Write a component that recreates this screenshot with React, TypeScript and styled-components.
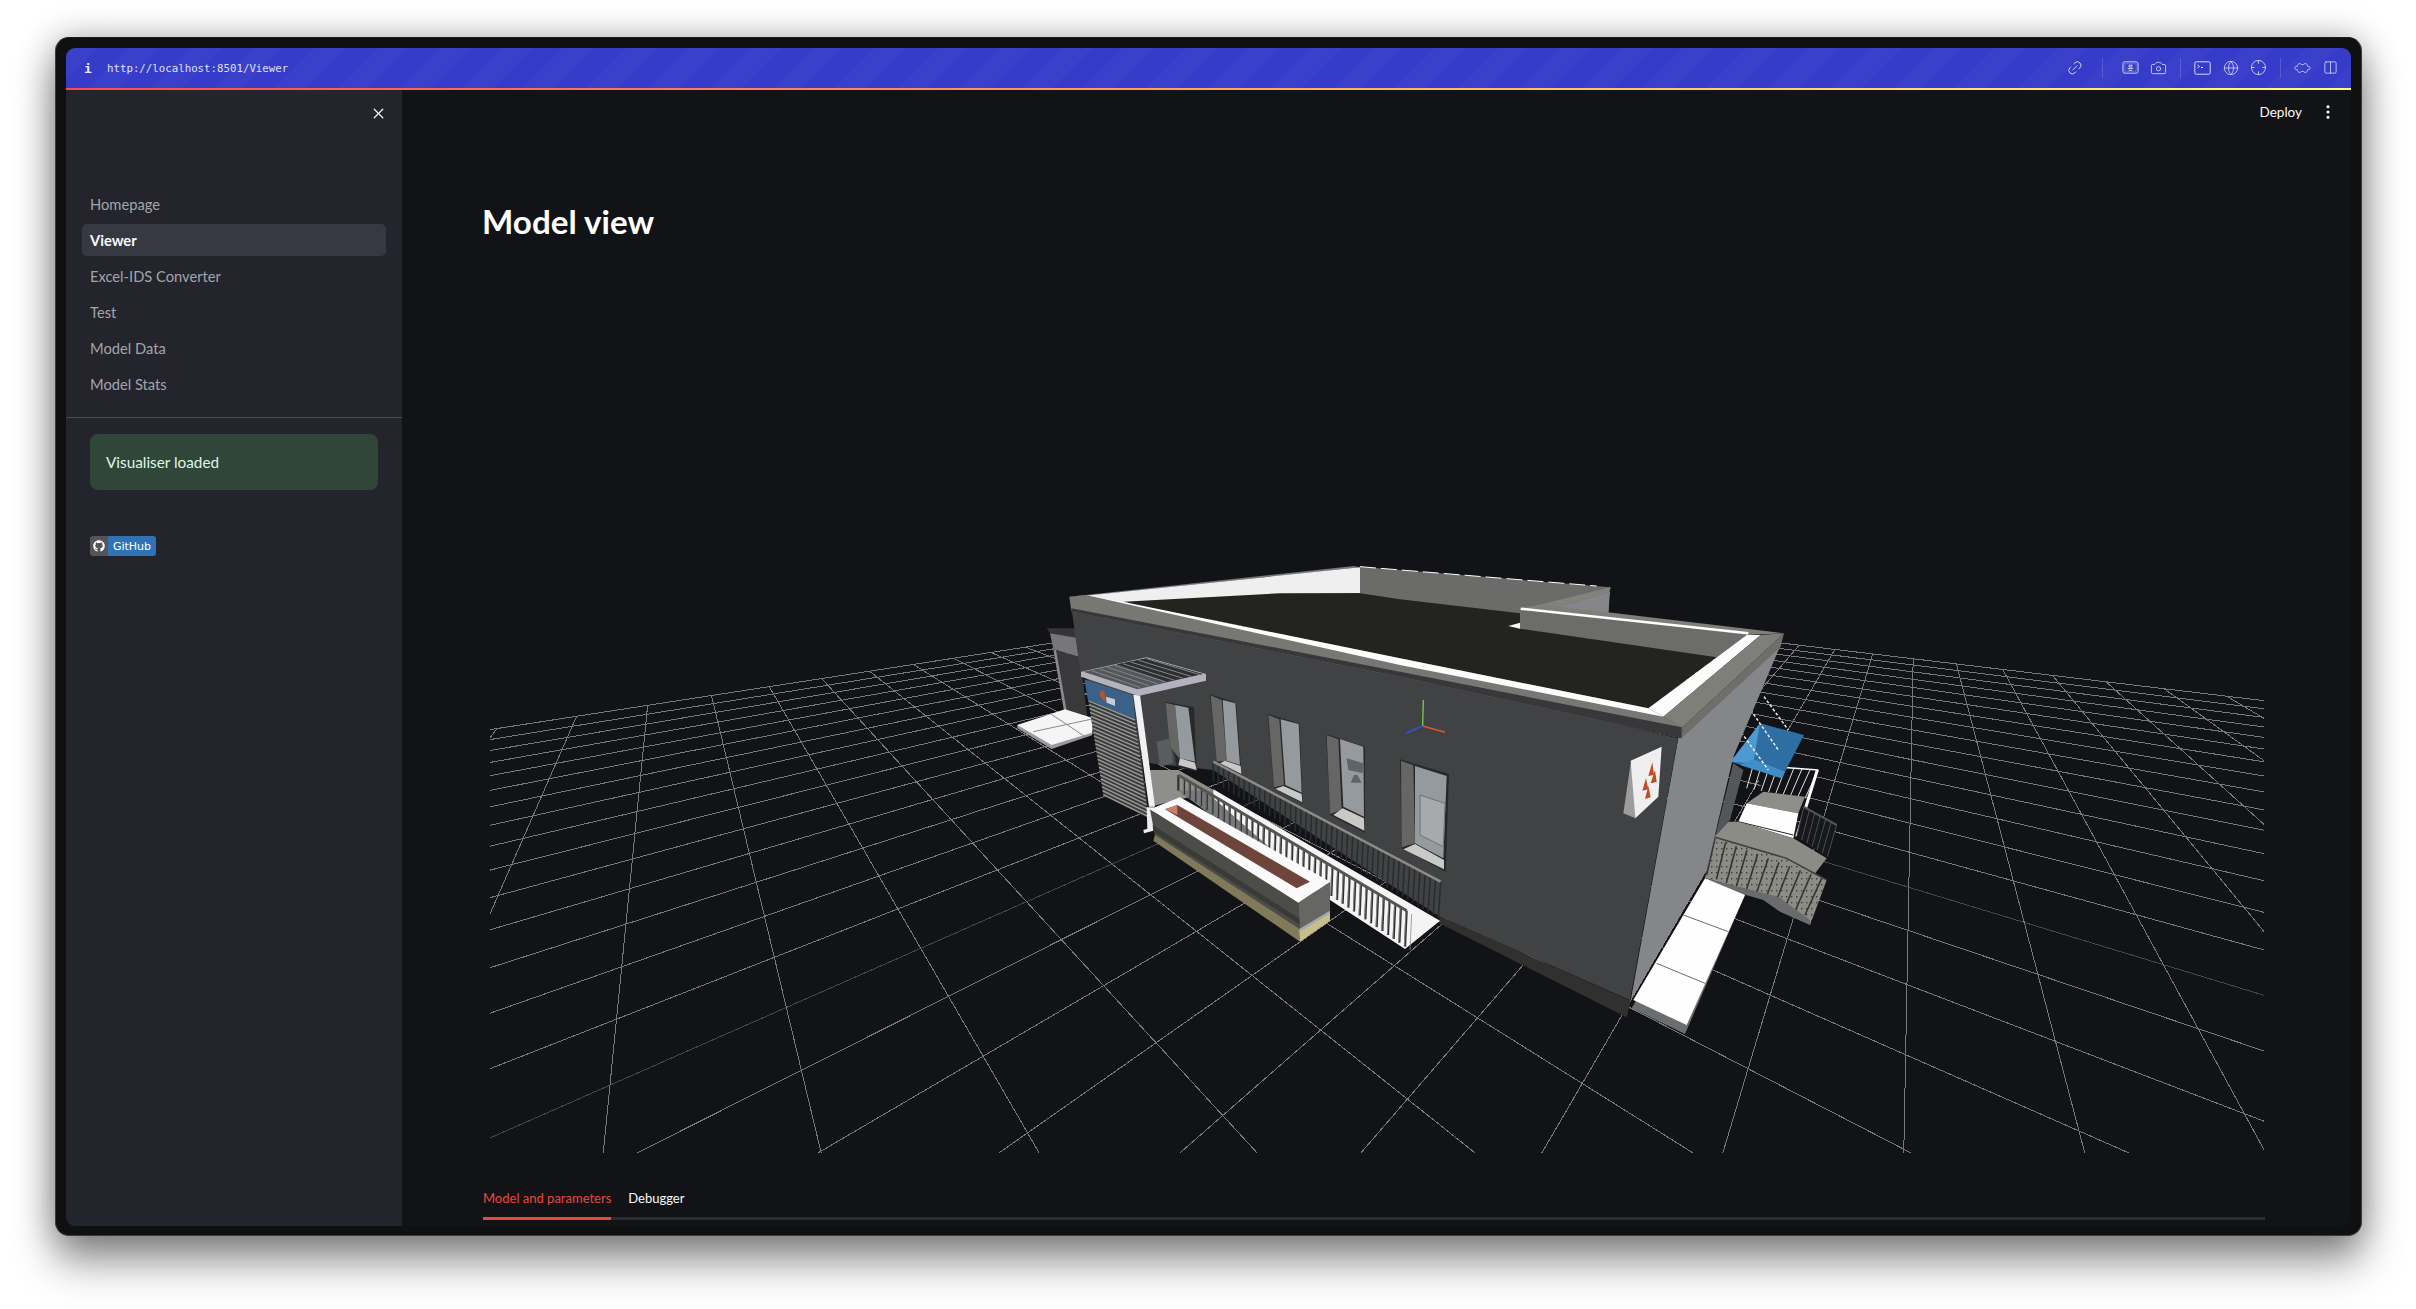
import React from 'react'
import styled, { createGlobalStyle } from 'styled-components'
import { Camera, Columns2, Crosshair, EllipsisVertical, Globe, Link2, X } from 'lucide-react'
import { FaGithub } from 'react-icons/fa'

const GlobalStyle = createGlobalStyle`
  html, body {
    margin: 0;
    height: 1309px;
    background: #fff;
    overflow: hidden;
  }
  body {
    font-family: Lato, "Noto Sans", sans-serif;
  }
`

const Page = styled.div`
  padding: 37px 0 0 55px;
`

const Frame = styled.div`
  width: 2307px;
  height: 1199px;
  box-sizing: border-box;
  padding: 10px 10px 9px;
  background: #0f1012;
  border-radius: 14px;
  border: 1px solid #3c3c3e;
  border-top-color: #1c1c1e;
  box-shadow: 0 26px 42px rgba(0, 0, 0, 0.42), 0 0 34px rgba(0, 0, 0, 0.28);
`

const Inner = styled.div`
  height: 100%;
  display: flex;
  flex-direction: column;
  overflow: hidden;
  border-radius: 9px;
  background: #121317;
`

const Toolbar = styled.div`
  height: 39.5px;
  flex: none;
  display: flex;
  align-items: center;
  padding: 0 12px 0 18px;
  color: #d9dbf7;
  background-color: #363bc9;
  background-image: repeating-linear-gradient(
    135deg,
    rgba(255, 255, 255, 0.025) 0 22px,
    rgba(255, 255, 255, 0) 22px 44px
  );
`

const InfoGlyph = styled.span`
  width: 23px;
  padding-top: 2px;
  font: 700 13px "DejaVu Sans Mono", monospace;
  color: #e8e9fb;
`

const Url = styled.span`
  flex: 1;
  padding-top: 2px;
  font: 10.75px "DejaVu Sans Mono", monospace;
  color: #dfe0f9;
`

const ToolIcons = styled.div`
  display: flex;
  align-items: center;
  gap: 11px;
`

const ToolDivider = styled.i<{ $wide?: boolean }>`
  width: 1px;
  height: 20px;
  margin: 0 ${(props) => (props.$wide ? 8 : 2)}px;
  background: rgba(255, 255, 255, 0.16);
`

const ToolIcon = styled.span<{ $rotate?: number }>`
  width: 17px;
  height: 17px;
  display: flex;
  align-items: center;
  justify-content: center;
  transform: rotate(${(props) => props.$rotate || 0}deg);
`

const Decoration = styled.div`
  height: 2.5px;
  flex: none;
  background: linear-gradient(90deg, #ff4b4b, #fffd80);
`

const Body = styled.div`
  flex: 1;
  min-height: 0;
  display: flex;
`

const Sidebar = styled.aside`
  width: 336px;
  flex: none;
  background: #23242c;
`

const CloseRow = styled.div`
  height: 98px;
  box-sizing: border-box;
  display: flex;
  justify-content: flex-end;
  padding: 15px 15px 0 0;
  color: #f3f3f4;
`

const NavList = styled.nav`
  display: flex;
  flex-direction: column;
  gap: 4px;
  padding: 0 16px 17px;
  border-bottom: 1px solid #4a4b52;
`

const NavItem = styled.div<{ $active?: boolean }>`
  height: 32px;
  display: flex;
  align-items: center;
  padding-left: 8px;
  border-radius: 5px;
  font-size: 14.7px;
  font-weight: ${(props) => (props.$active ? 700 : 400)};
  color: ${(props) => (props.$active ? '#fafafa' : '#a4a5aa')};
  background: ${(props) => (props.$active ? '#363842' : 'transparent')};
`

const Alert = styled.div`
  height: 56px;
  margin: 16px 24px 0;
  display: flex;
  align-items: center;
  padding-left: 16px;
  border-radius: 8px;
  font-size: 15.3px;
  color: #dff5e6;
  background: #304639;
`

const Badge = styled.div`
  width: 66px;
  height: 20px;
  margin: 46px 0 0 24px;
  display: flex;
  overflow: hidden;
  border-radius: 3px;
  font: 11px "DejaVu Sans", sans-serif;
  color: #fff;
`

const BadgeIcon = styled.span`
  width: 18px;
  display: flex;
  align-items: center;
  justify-content: center;
  background: #555;
`

const BadgeLabel = styled.span`
  flex: 1;
  display: flex;
  align-items: center;
  justify-content: center;
  background: #2f73b5;
`

const Main = styled.main`
  flex: 1;
  min-width: 0;
  display: flex;
  flex-direction: column;
  padding: 0 86px 0 81px;
`

const TopBar = styled.div`
  height: 44px;
  flex: none;
  display: flex;
  align-items: center;
  justify-content: flex-end;
  gap: 17px;
  margin-right: -72px;
  font-size: 13.5px;
  color: #fafafa;
`

const Title = styled.h1`
  margin: 67px 0 0 -1px;
  height: 79px;
  font-size: 33.2px;
  line-height: 40px;
  font-weight: 700;
  color: #fff;
`

const SceneBox = styled.div`
  height: 873px;
  flex: none;
  margin-left: 7px;
`

const SceneSvg = styled.svg`
  display: block;
  width: 1774px;
  height: 873px;
`

const Tabs = styled.div`
  height: 36px;
  flex: none;
  margin-top: 28px;
  display: flex;
  gap: 17px;
  border-bottom: 3px solid #2b2c33;
`

const Tab = styled.div<{ $active?: boolean }>`
  height: 28px;
  box-sizing: content-box;
  padding-top: 8px;
  font-size: 13px;
  line-height: 18px;
  color: ${(props) => (props.$active ? '#e8483f' : '#fafafa')};
  border-bottom: 3px solid ${(props) => (props.$active ? '#e8483f' : 'transparent')};
`

// fitted perspective of the ground grid, in page pixels
const G = -0.0228
const H = -0.01893
const project = (u: number, v: number) => {
  const w = 1 + G * u + H * v
  return [
    (G * u * 1916 + H * v * 667 + 1370.6) / w,
    (G * u * 510 + H * v * 510 + 594) / w
  ]
}

function GridLines () {
  const lines: React.ReactNode[] = []
  for (let i = 0; i <= 30; i++) {
    const vEnd = Math.min(30, (0.94 + G * i) / -H)
    const uEnd = Math.min(30, (0.94 + H * i) / -G)
    const stroke = i === 15 ? '#45464a' : '#77787b'
    const a = project(i, 0)
    const b = project(i, vEnd)
    const c = project(0, i)
    const d = project(uEnd, i)
    lines.push(<line key={'u' + i} x1={a[0]} y1={a[1]} x2={b[0]} y2={b[1]} stroke={stroke} />)
    lines.push(<line key={'v' + i} x1={c[0]} y1={c[1]} x2={d[0]} y2={d[1]} stroke={stroke} />)
  }
  return <g shapeRendering='crispEdges'>{lines}</g>
}

// the zoomed crops of the building are 3x, so points are noted per crop origin
const crop = (ox: number, oy: number) => (...c: number[]) => {
  const out: string[] = []
  for (let i = 0; i < c.length; i += 2) out.push(`${ox + c[i] / 3},${oy + c[i + 1] / 3}`)
  return out.join(' ')
}
const A = crop(1000, 550)
const B = crop(1400, 550)
const C = crop(1100, 750)

type Bars = {
  top: number[]
  bottom: number[]
  count: number
  stroke: string
  width?: number
}

function Railing ({ top, bottom, count, stroke, width = 1 }: Bars) {
  const bars: React.ReactNode[] = []
  for (let i = 0; i <= count; i++) {
    const t = i / count
    bars.push(
      <line
        key={i}
        x1={top[0] + (top[2] - top[0]) * t}
        y1={top[1] + (top[3] - top[1]) * t}
        x2={bottom[0] + (bottom[2] - bottom[0]) * t}
        y2={bottom[1] + (bottom[3] - bottom[1]) * t}
        stroke={stroke}
        strokeWidth={width}
      />
    )
  }
  return <g>{bars}</g>
}

const at = (ox: number, oy: number, c: number[]) => [ox + c[0] / 3, oy + c[1] / 3, ox + c[2] / 3, oy + c[3] / 3]

type WindowProps = {
  frame: string
  reveal: string
  glass: string
  sill: string
}

function BuildingWindow ({ frame, reveal, glass, sill }: WindowProps) {
  return (
    <g>
      <polygon points={frame} fill='#26282a' />
      <polygon points={reveal} fill='#666664' />
      <polygon points={glass} fill='#959a9e' />
      <polygon points={sill} fill='#c9cac6' />
    </g>
  )
}

function lineAt (points: string) {
  const [a, b] = points.split(' ').map((p) => p.split(',').map(Number))
  return { x1: a[0], y1: a[1], x2: b[0], y2: b[1] }
}

function Annex () {
  return (
    <g>
      <polygon points={A(140, 235, 232, 235, 228, 268, 150, 250)} fill='#34343a' />
      <polygon points={A(150, 250, 236, 265, 240, 322, 160, 298)} fill='#77777a' />
      <polygon points={A(160, 298, 240, 322, 262, 500, 195, 482)} fill='#39393b' />
      <polygon points={A(160, 298, 168, 300, 200, 482, 192, 482)} fill='#8a8a8c' />
      <polygon points={A(52, 525, 195, 482, 280, 512, 276, 556, 155, 597, 52, 535)} fill='#9a9a9c' />
      <polygon points={A(52, 525, 195, 478, 280, 505, 276, 548, 155, 585)} fill='#f5f5f5' />
      <line {...lineAt(A(100, 545, 272, 508))} stroke='#8a8a8a' />
      <line {...lineAt(A(150, 490, 255, 560))} stroke='#8a8a8a' />
    </g>
  )
}

function EntrancePanel () {
  const louvers: React.ReactNode[] = []
  for (let i = 0; i < 25; i++) {
    const t = i / 24
    louvers.push(
      <line
        key={i}
        x1={1000 + (265 + 45 * t) / 3}
        y1={550 + (452 + 282 * t) / 3}
        x2={1000 + (405 + 40 * t) / 3}
        y2={550 + (510 + 290 * t) / 3}
        stroke='#9a9a98'
        strokeWidth={1.4}
      />
    )
  }
  return (
    <g>
      <polygon points={A(255, 390, 400, 435, 447, 805, 310, 737)} fill='#3b3b3b' />
      {louvers}
      <polygon points={A(253, 388, 398, 435, 406, 507, 264, 450)} fill='#3c6188' />
      <polygon points={A(298, 425, 312, 420, 318, 455, 304, 445)} fill='#b9502e' />
      <polygon points={A(318, 440, 345, 448, 345, 468, 320, 458)} fill='#c3cdd8' />
      <polygon points={A(400, 435, 420, 435, 465, 770, 447, 770)} fill='#f1f1f3' />
      <polygon points={A(440, 772, 462, 772, 460, 842, 432, 850, 430, 840, 442, 836)} fill='#ececee' />
      <polygon points={A(243, 365, 440, 322, 618, 372, 618, 392, 415, 438, 243, 380)} fill='#b4b2bc' />
      <polygon points={A(250, 365, 440, 325, 608, 372, 412, 418)} fill='#55575c' />
      <polygon points={A(350, 343, 440, 325, 608, 372, 500, 395)} fill='#2e2f32' />
      <Railing top={at(1000, 550, [275, 362, 440, 326])} bottom={at(1000, 550, [420, 412, 600, 374])} count={7} stroke='#84868a' />
    </g>
  )
}

function Planter () {
  return (
    <g>
      <polygon points={C(150, 178, 595, 458, 600, 542, 165, 258)} fill='#4c4c48' />
      <polygon points={C(158, 225, 597, 505, 597, 522, 160, 245)} fill='#3a3a37' />
      <polygon points={C(595, 458, 690, 395, 690, 482, 600, 540)} fill='#666664' />
      <polygon points={C(165, 255, 600, 538, 600, 575, 160, 272)} fill='#80795a' />
      <polygon points={C(598, 538, 690, 482, 690, 512, 600, 575)} fill='#c9bd8a' />
      <polygon points={C(598, 538, 690, 482, 690, 490, 598, 546)} fill='#a5a7b0' />
      <polygon points={C(150, 178, 240, 142, 690, 395, 595, 458)} fill='#fafafa' />
      <polygon points={C(195, 178, 232, 165, 630, 395, 590, 415)} fill='#6e453a' />
      <polygon points={C(195, 178, 232, 165, 232, 195)} fill='#c9806a' />
    </g>
  )
}

function Terrace () {
  return (
    <g>
      <polygon points={C(150, 60, 235, 60, 345, 122, 150, 170)} fill='#8e8e8a' />
      <polygon points={C(235, 122, 345, 122, 690, 345, 690, 460)} fill='#77787a' />
      <polygon points={C(340, 118, 1020, 512, 915, 597, 690, 450, 340, 145)} fill='#f4f4f4' />
      <Railing top={at(1100, 750, [340, 35, 1022, 395])} bottom={at(1100, 750, [340, 95, 1015, 505])} count={44} stroke='#2a2b2c' width={1.5} />
      <line {...lineAt(C(340, 35, 1022, 395))} stroke='#8b8b88' strokeWidth={2.5} />
      <Railing top={at(1100, 750, [235, 75, 920, 482])} bottom={at(1100, 750, [235, 122, 915, 590])} count={40} stroke='#2f3031' width={2.2} />
      <Railing top={at(1100, 750, [250, 85, 935, 492])} bottom={at(1100, 750, [250, 132, 930, 600])} count={40} stroke='#8d8e8e' width={0.8} />
      <line {...lineAt(C(235, 75, 920, 482))} stroke='#55564f' strokeWidth={3} />
      <polygon points={A(470, 575, 510, 565, 520, 640, 480, 650)} fill='#5b5c5d' />
    </g>
  )
}

function BackStair () {
  return (
    <g>
      <polygon points={B(1060, 650, 1255, 660, 1215, 745, 1090, 725)} fill='#111317' />
      <Railing top={at(1400, 550, [1060, 645, 1255, 660])} bottom={at(1400, 550, [1040, 715, 1215, 745])} count={8} stroke='#e4e4e4' />
      <line {...lineAt(B(1060, 645, 1255, 660))} stroke='#fff' strokeWidth={1.5} />
      <line {...lineAt(B(1252, 660, 1190, 860))} stroke='#fff' strokeWidth={3} />
      <polygon points={B(1090, 725, 1215, 740, 1195, 790, 1040, 760)} fill='#8d8d89' />
      <polygon points={B(1040, 760, 1195, 790, 1180, 865, 1015, 815)} fill='#fefefe' />
      <line {...lineAt(B(1015, 815, 1180, 855))} stroke='#222' />
      <polygon points={B(985, 815, 1015, 815, 1180, 865, 1280, 925, 1230, 990, 940, 860)} fill='#8c8c87' />
      <polygon points={B(940, 860, 1160, 925, 1280, 990, 1230, 1125, 1140, 1045, 915, 985)} fill='url(#perforated)' />
      <Railing top={at(1400, 550, [945, 865, 1265, 985])} bottom={at(1400, 550, [920, 975, 1215, 1095])} count={10} stroke='#34352f' width={1.6} />
      <polyline points={B(940, 860, 1160, 925, 1280, 990)} fill='none' stroke='#3f403c' strokeWidth={1.5} />
      <polygon points={B(915, 985, 1135, 1040, 1230, 1110, 1230, 1125, 1140, 1085, 1090, 1050, 915, 1000)} fill='#6a6b6c' />
      <polygon points={B(1210, 770, 1310, 825, 1280, 920, 1190, 860)} fill='#17181b' />
      <Railing top={at(1400, 550, [1212, 770, 1310, 825])} bottom={at(1400, 550, [1190, 860, 1282, 920])} count={6} stroke='#4c4d4e' />
      <line {...lineAt(B(1210, 770, 1310, 825))} stroke='#55564f' strokeWidth={2} />
    </g>
  )
}

function Canopy () {
  return (
    <g>
      <polygon points={B(1080, 520, 1212, 555, 1145, 685, 992, 635)} fill='#2f6ea3' />
      <polygon points={B(1080, 520, 1060, 640, 992, 635)} fill='#4b9bd0' />
      <polygon points={B(1060, 628, 1155, 665, 1145, 685, 1020, 645)} fill='#3f8fc6' />
      <line {...lineAt(B(1092, 440, 1165, 540))} stroke='#ececec' strokeWidth={1.5} strokeDasharray='3 2' />
      <line {...lineAt(B(1052, 480, 1135, 600))} stroke='#ececec' strokeWidth={1.5} strokeDasharray='3 2' />
      <line {...lineAt(B(1015, 535, 1105, 660))} stroke='#ececec' strokeWidth={1.5} strokeDasharray='3 2' />
    </g>
  )
}

function Roof () {
  return (
    <g>
      {/* raised block at the back */}
      <polygon points={B(-120, 50, 632, 112, 628, 125, 625, 195, 440, 178, 360, 240, -120, 135)} fill='#6b6b69' />
      <polygon points={B(630, 125, 625, 190, 450, 178)} fill='#85868a' />
      <polygon points={B(632, 112, 628, 125, 450, 178, 362, 178)} fill='#83837d' />
      <polyline points={B(-120, 50, 590, 108)} fill='none' stroke='#fff' strokeDasharray='16 5' />
      {/* white flashing at the back */}
      <polygon points={A(208, 140, 1062, 48, 1080, 52, 260, 138)} fill='#76777a' />
      <polygon points={A(255, 137, 1080, 52, 1080, 130, 840, 132, 372, 158)} fill='#efefef' />
      {/* roof slab */}
      <polygon points={A(370, 155, 840, 130, 1080, 130, 1200, 148, 1560, 190, 1560, 236, 2150, 320, 1945, 475, 1200, 325)} fill='#23231f' />
      <polygon points={B(325, 228, 360, 218, 360, 236)} fill='#f6f6f6' />
      {/* rear parapet with its white cap */}
      <polygon points={B(360, 178, 1045, 252, 950, 322, 360, 236)} fill='#6c6c6a' />
      <polygon points={B(362, 172, 440, 165, 1152, 250, 1040, 255)} fill='#7f7f7a' />
      <polyline points={B(362, 176, 1045, 250)} fill='none' stroke='#fff' strokeWidth={2.5} />
      {/* front parapet */}
      <polygon points={A(208, 140, 258, 135, 372, 158, 1200, 325, 1945, 475, 1990, 500, 2048, 530, 2045, 565, 1200, 380, 214, 185)} fill='#777773' />
      <polygon points={A(258, 135, 372, 156, 1200, 325, 1945, 475, 1990, 500, 1200, 345)} fill='#fcfcfc' />
      <polygon points={B(745, 475, 1040, 255, 1082, 255, 790, 500)} fill='#fcfcfc' />
      <polygon points={B(1082, 255, 1152, 250, 848, 532, 790, 500)} fill='#7f7f7a' />
      <polygon points={A(214, 175, 1200, 365, 2045, 532, 2045, 565, 1200, 380, 214, 185)} fill='#38383a' />
      <polygon points={B(848, 532, 1152, 250, 1142, 290, 845, 565)} fill='#6e6e6a' />
    </g>
  )
}

function Scene () {
  return (
    <SceneSvg viewBox='490 280 1774 873' aria-hidden='true'>
      <defs>
        <pattern id='perforated' width='5' height='6' patternUnits='userSpaceOnUse'>
          <rect width='5' height='6' fill='#8c8c87' />
          <rect x='1' y='2' width='1.4' height='1.4' fill='#3d3e3a' />
        </pattern>
      </defs>
      <GridLines />
      <Annex />
      {/* side wall and pavement */}
      <BackStair />
      <Canopy />
      <polygon points={B(915, 990, 1035, 1035, 855, 1452, 695, 1375)} fill='#6c6d6f' />
      <polygon points={B(915, 985, 1035, 1035, 860, 1425, 700, 1350)} fill='#fefefe' />
      <line {...lineAt(B(850, 1095, 985, 1145))} stroke='#6a6a6a' />
      <line {...lineAt(B(770, 1240, 915, 1300))} stroke='#6a6a6a' />
      <polygon points={B(835, 565, 1142, 285, 1000, 620, 920, 960, 692, 1352)} fill='#85868a' />
      <polygon points={B(1000, 640, 1030, 660, 990, 810, 945, 860)} fill='#55565a' />
      {/* main wall */}
      <polygon points={A(214, 170, 1200, 370, 2034, 565, 1890, 1350, 1320, 1100, 640, 660, 450, 640, 240, 360)} fill='#414244' />
      <polygon points={B(120, 1100, 692, 1352, 680, 1402, 115, 1118)} fill='#30302e' />
      <Roof />
      <BuildingWindow
        frame={A(495, 455, 582, 472, 590, 665, 530, 650)}
        reveal={A(497, 458, 525, 465, 540, 628, 510, 590)}
        glass={A(525, 465, 565, 473, 585, 635, 540, 625)}
        sill={A(540, 625, 585, 638, 590, 660, 535, 645)}
      />
      <BuildingWindow
        frame={A(630, 433, 708, 458, 725, 680, 650, 640)}
        reveal={A(632, 436, 665, 450, 680, 632, 650, 635)}
        glass={A(668, 450, 706, 460, 720, 645, 680, 632)}
        sill={A(675, 632, 722, 648, 724, 672, 660, 640)}
      />
      <BuildingWindow
        frame={A(803, 492, 898, 520, 908, 760, 822, 715)}
        reveal={A(805, 495, 838, 508, 852, 705, 822, 712)}
        glass={A(842, 508, 896, 522, 905, 728, 856, 705)}
        sill={A(850, 708, 905, 732, 907, 757, 826, 716)}
      />
      <BuildingWindow
        frame={A(978, 552, 1095, 590, 1095, 848, 990, 795)}
        reveal={A(980, 555, 1015, 568, 1025, 780, 990, 792)}
        glass={A(1020, 567, 1090, 590, 1092, 800, 1030, 770)}
        sill={A(1028, 775, 1092, 805, 1093, 842, 1000, 795)}
      />
      <g fill='#5f6468'>
        <polygon points={A(1040, 625, 1090, 640, 1088, 670, 1045, 660)} />
        <polygon points={A(1062, 675, 1072, 675, 1085, 698, 1052, 698)} />
      </g>
      <BuildingWindow
        frame={C(900, 28, 1047, 72, 1037, 365, 905, 295)}
        reveal={C(903, 32, 940, 46, 945, 280, 905, 292)}
        glass={C(945, 48, 1040, 78, 1030, 325, 945, 280)}
        sill={C(945, 282, 1032, 330, 1032, 358, 910, 298)}
      />
      <polygon points={C(960, 135, 1035, 160, 1030, 290, 960, 255)} fill='#a6aaad' stroke='#6f7275' />
      <Terrace />
      <EntrancePanel />
      <Planter />
      {/* sign on the wall */}
      <polygon points={B(692, 640, 708, 642, 706, 805, 670, 790)} fill='#9c9c9c' />
      <polygon points={B(692, 632, 785, 590, 775, 740, 706, 805)} fill='#efefef' />
      <g fill='#c24a26'>
        <polygon points={B(757, 637, 762, 675, 745, 678)} />
        <polygon points={B(765, 660, 770, 695, 752, 700)} />
        <polygon points={B(738, 685, 745, 718, 727, 722)} />
        <polygon points={B(745, 708, 752, 742, 735, 747)} />
      </g>
      {/* axes at the origin */}
      <line {...lineAt(B(68, 528, 70, 450))} stroke='#7fcc4a' strokeWidth={1.3} />
      <line {...lineAt(B(68, 528, 135, 547))} stroke='#e2562c' strokeWidth={1.6} />
      <line {...lineAt(B(68, 528, 18, 550))} stroke='#2b55d8' strokeWidth={1.6} />
    </SceneSvg>
  )
}

function ScreenIcon () {
  return (
    <svg width='18' height='15' viewBox='0 0 18 15' fill='none' stroke='currentColor'>
      <rect x='1' y='1.5' width='16' height='12' rx='2' />
      <rect x='3' y='3.5' width='12' height='8' strokeDasharray='1 1' opacity='0.6' />
      <path d='M7.5 5h3v2h-3zM6 8.5h6M7 10.5h4' />
    </svg>
  )
}

function TerminalIcon () {
  return (
    <svg width='17' height='14' viewBox='0 0 17 14' fill='none' stroke='currentColor'>
      <rect x='0.8' y='0.8' width='15.4' height='12.4' rx='1.5' />
      <path d='M3.5 4l2 1.5-2 1.5M7 6.5h2' />
    </svg>
  )
}

function PuzzleIcon () {
  return (
    <svg width='21' height='14' viewBox='0 0 21 14' fill='none' stroke='currentColor'>
      <path d='M1 7C1 5.4 2.6 4.6 4 5.2 4 3 5.4 1.5 7.2 1.5c1 0 1.7.5 2 1.3h2.6c.3-.8 1-1.3 2-1.3 1.8 0 3.2 1.5 3.2 3.7C18.4 4.6 20 5.4 20 7s-1.6 2.4-3 1.8c0 2.2-1.4 3.7-3.2 3.7-1 0-1.7-.5-2-1.3H9.2c-.3.8-1 1.3-2 1.3C5.4 12.5 4 11 4 8.8 2.6 9.4 1 8.6 1 7z' />
    </svg>
  )
}

export default function App () {
  const navItems = ['Homepage', 'Viewer', 'Excel-IDS Converter', 'Test', 'Model Data', 'Model Stats']
  return (
    <Page>
      <GlobalStyle />
      <Frame>
        <Inner>
          <Toolbar>
            <InfoGlyph>i</InfoGlyph>
            <Url>http://localhost:8501/Viewer</Url>
            <ToolIcons>
              <ToolIcon $rotate={-45}><Link2 size={18} strokeWidth={1.3} /></ToolIcon>
              <ToolDivider $wide />
              <ToolIcon><ScreenIcon /></ToolIcon>
              <ToolIcon><Camera size={18} strokeWidth={1.2} /></ToolIcon>
              <ToolDivider />
              <ToolIcon><TerminalIcon /></ToolIcon>
              <ToolIcon><Globe size={16} strokeWidth={1.2} /></ToolIcon>
              <ToolIcon><Crosshair size={17} strokeWidth={1.2} /></ToolIcon>
              <ToolDivider />
              <ToolIcon><PuzzleIcon /></ToolIcon>
              <ToolIcon><Columns2 size={15} strokeWidth={1.3} /></ToolIcon>
            </ToolIcons>
          </Toolbar>
          <Decoration />
          <Body>
            <Sidebar>
              <CloseRow><X size={17} strokeWidth={1.8} /></CloseRow>
              <NavList>
                {navItems.map((item) => (
                  <NavItem key={item} $active={item === 'Viewer'}>{item}</NavItem>
                ))}
              </NavList>
              <Alert>Visualiser loaded</Alert>
              <Badge>
                <BadgeIcon><FaGithub size={12} /></BadgeIcon>
                <BadgeLabel>GitHub</BadgeLabel>
              </Badge>
            </Sidebar>
            <Main>
              <TopBar>
                <span>Deploy</span>
                <EllipsisVertical size={18} strokeWidth={2.2} />
              </TopBar>
              <Title>Model view</Title>
              <SceneBox><Scene /></SceneBox>
              <Tabs>
                <Tab $active>Model and parameters</Tab>
                <Tab>Debugger</Tab>
              </Tabs>
            </Main>
          </Body>
        </Inner>
      </Frame>
    </Page>
  )
}
